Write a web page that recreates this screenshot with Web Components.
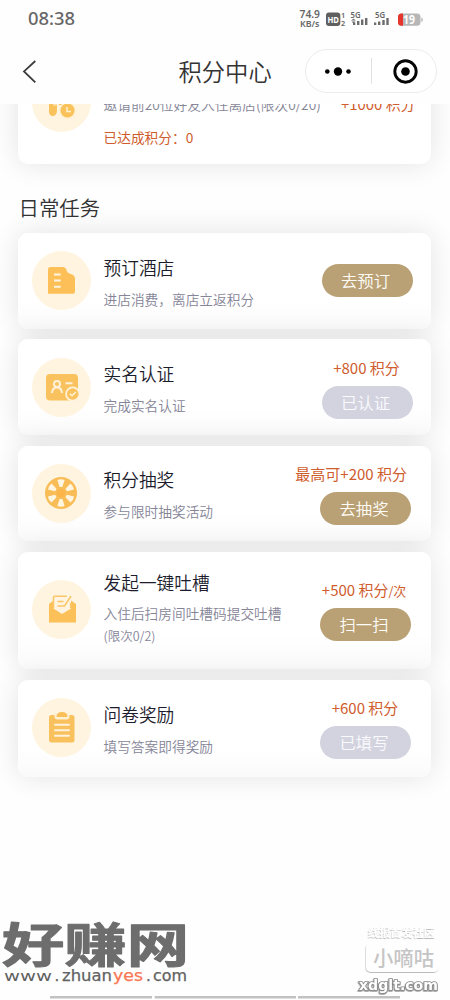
<!DOCTYPE html>
<html lang="zh-CN">
<head>
<meta charset="utf-8">
<title>积分中心</title>
<style>
html,body{margin:0;height:100%;background:#fefefe;overflow:hidden}
body{font-family:"Noto Sans CJK SC","Noto Sans",sans-serif}
</style>
</head>
<body>
<points-app></points-app>
<script>
const define = (name, html, setup) => {
  const tpl = document.createElement('template');
  tpl.innerHTML = html;
  customElements.define(name, class extends HTMLElement {
    constructor() {
      super();
      this.attachShadow({mode: 'open'}).append(tpl.content.cloneNode(true));
    }
    connectedCallback() { if (setup) setup(this, this.shadowRoot); }
  });
};

define('status-bar', `
<style>
:host{display:flex;height:39px;justify-content:space-between;align-items:stretch}
svg{display:block}
text{font-family:"Noto Sans",sans-serif;fill:#676767}
</style>
<svg width="100" height="39"><text x="28" y="25.3" font-size="17.3" font-weight="500" textLength="47" lengthAdjust="spacingAndGlyphs">08:38</text></svg>
<svg width="155" height="39">
<text x="4.5" y="17.6" font-size="10" font-weight="600" textLength="20.5" lengthAdjust="spacingAndGlyphs">74.9</text>
<text x="5" y="27" font-size="8.8" font-weight="600" textLength="19.5" lengthAdjust="spacingAndGlyphs">KB/s</text>
<rect x="31" y="12.5" width="14.3" height="13.5" rx="3" fill="#5f5f5f"/>
<text x="32.4" y="23" font-size="9.5" font-weight="700" textLength="11.5" lengthAdjust="spacingAndGlyphs" style="fill:#fff">HD</text>
<text x="46" y="17.6" font-size="7.4" font-weight="600">1</text>
<text x="46" y="25.6" font-size="7.4" font-weight="600">2</text>
<text x="55.5" y="18.2" font-size="8" font-weight="600" textLength="10" lengthAdjust="spacingAndGlyphs">5G</text>
<text x="80" y="18.2" font-size="8" font-weight="600" textLength="10" lengthAdjust="spacingAndGlyphs">5G</text>
<g fill="#6c6c6c"><path d="M56 20.6h5l-2.5-1.8zM56.5 21.6h4l-2 2z"/><path d="M58 22.5h2.3V25H58zM62 21h2.4v4H62zM66 19.5h2.4V25H66zM70 18h2.4v7H70zM79 22.5h2.3V25H79zM83 21.5h2.4V25H83zM87.3 20h2.4v5h-2.4zM91.3 18h2.4v7h-2.4z"/></g>
<rect x="103" y="13.5" width="22.5" height="12.3" rx="3.6" fill="#b7b7b7"/>
<path d="M108 13.5h-1.4a3.6 3.6 0 0 0-3.6 3.6v5.1a3.6 3.6 0 0 0 3.6 3.6h1.4z" fill="#e5352c"/>
<path d="M126.3 17.5q1.6.3 1.6 2.2t-1.6 2.2z" fill="#b7b7b7"/>
<text x="108" y="24" font-size="11.5" font-weight="700" textLength="12" lengthAdjust="spacingAndGlyphs" style="fill:#fff">19</text>
</svg>`);

define('nav-bar', `
<style>
:host{display:grid;grid-template-columns:305px 132px;height:65px}
svg{display:block}
.capsule{margin-top:10px;width:130px;height:42px;border:1px solid #ececec;border-radius:23px;background:#fff}
text{font-family:"Noto Sans CJK SC",sans-serif}
</style>
<svg width="305" height="65"><path d="M35.3 22 24 32.4 35.3 43.3" fill="none" stroke="#3c3c3c" stroke-width="1.8"/>
<text x="178.5" y="42.3" font-size="23.3" fill="#333" font-weight="350">积分中心</text></svg>
<svg class="capsule" viewBox="0 0 130 42"><circle cx="21.3" cy="21.5" r="2.3"/><circle cx="32" cy="21.5" r="4.2"/><circle cx="42.5" cy="21.5" r="2.3"/><path d="M65.5 8v26" stroke="#e2e2e2"/><circle cx="99.5" cy="21.5" r="10.7" fill="none" stroke="#050505" stroke-width="2.9"/><circle cx="99.5" cy="21.5" r="4.3"/></svg>`);

const ICONS = {
  invite: '<path d="M17 20h8v17.5a4.2 6 0 0 1-8 2z" fill="#fac25b"/><path d="M22 22v10h5" fill="none" stroke="#fff0d2" stroke-width="1.2"/><path d="M27 24h13v8H27z" fill="#fac25b"/><circle cx="35.5" cy="37.5" r="8.5" fill="#fff0d2"/><circle cx="35.5" cy="37.5" r="7" fill="#fac25b"/><path d="M35 34v4.5h4" fill="none" stroke="#fff0d2" stroke-width="1.5"/>',
  hotel: '<path d="M16 18.5a2.5 2.5 0 0 1 2.5-2.5h12q3.5 0 4.2 3.5.5 2.3 2.8 3l3 1.2q2.5 1 2.5 3.8v13.3a2 2 0 0 1-2 2H16z" fill="#fdc058"/><path d="M22 23.5h6.7M22 29.5h6.7M22 35.7h6.7" stroke="#fff4df" stroke-width="2"/>',
  identity: '<rect x="14" y="16" width="32" height="26.5" rx="4" fill="#fac25f"/><circle cx="25" cy="26" r="3" fill="none" stroke="#fff2d9" stroke-width="2"/><path d="M20 35q.5-5.5 5-5.5t5 5.5M33.5 25.2h7" fill="none" stroke="#fff2d9" stroke-width="2"/><circle cx="40.7" cy="36" r="7.5" fill="#fff2db"/><circle cx="40.7" cy="36" r="5.8" fill="#fac25f"/><path d="m37.8 35.8 2.2 2 3.8-3.9" fill="none" stroke="#fff2d9" stroke-width="1.5"/>',
  wheel: '<circle cx="29" cy="29" r="16" fill="#f9bd58"/><g fill="#fff6e2"><path id="s" d="m27.6 23-2.2-7q3.6-1.4 7.2 0l-2.2 7z"/><use href="#s" transform="rotate(60 29 29)"/><use href="#s" transform="rotate(120 29 29)"/><use href="#s" transform="rotate(180 29 29)"/><use href="#s" transform="rotate(240 29 29)"/><use href="#s" transform="rotate(300 29 29)"/></g><circle cx="29" cy="29" r="4" fill="#fcb54a"/>',
  mail: '<path d="m17 24 4.5-3.5v8L30 34l9-5.5v-8l5 3.500v18.5H17z" fill="#fbc058"/><path d="M21.5 28V17.5a1.3 1.3 0 0 1 1.3-1.3h12M38.700 23v5M25.500 21.500h6M25.500 26h7l6.600-10" fill="none" stroke="#fbc568" stroke-width="1.5"/>',
  survey: '<rect x="17" y="17" width="25.5" height="27.5" rx="2.5" fill="#f9c15e"/><path d="M22.5 15h15v3.5q0 3-3 3h-9q-3 0-3-3z" fill="#fff0d2"/><path d="M24.5 19q0-5 5.500-5t5.500 5z" fill="#f9bf58"/><path d="M23 26.700h14M23 32.200h14M23 37.800h14" stroke="#fff2dc" stroke-width="1.9" stroke-linecap="round"/>'
};
define('task-icon', `
<style>:host{display:block;width:59px;height:59px;border-radius:50%;background:#fff4df}svg{display:block}</style>
<svg width="59" height="59" viewBox="0 0 59 59"></svg>`, (el, root) => {
  root.querySelector('svg').innerHTML = ICONS[el.getAttribute('name')];
});

define('pill-button', `
<style>
:host{display:block;width:91px;height:33px;border-radius:17px;background:#b9a175;color:#fffdf8;font-size:16.4px;line-height:32px;text-align:center;text-indent:-3px;font-weight:350}
:host([done]){background:#d3d3df;color:#fafafd}
</style><slot></slot>`);

define('task-card', `
<style>
:host{display:grid;grid-template-columns:59px 1fr auto;box-sizing:border-box;width:412.5px;height:var(--h,95.5px);padding:0 18px 0 14px;column-gap:12.5px;align-items:center;border-radius:10px;background:linear-gradient(#fff 70%,#fafafa);box-shadow:0 0 28px rgba(0,0,0,.11)}
task-icon{margin-top:var(--icon,0px)}
.body{margin-top:var(--text,4px);white-space:nowrap;min-width:0}
.title{font-size:17.7px;line-height:32px;color:#1c1c2c;display:block;font-weight:350}
.desc{font-size:13.7px;line-height:var(--lead,32px);color:#858597;display:block;font-weight:350}
.action{margin-top:var(--act,0px);width:91px;margin-right:var(--right,0px)}
.points{display:flex;justify-content:var(--pj,center);width:var(--pw,90px);height:22px;margin-bottom:7px;white-space:nowrap;color:#cf5c2d;font-size:15px;line-height:22px}
.points.none{display:none}
</style>
<task-icon></task-icon>
<div class="body"><slot name="title" class="title"></slot><slot name="desc" class="desc"></slot></div>
<div class="action"><div class="points"><slot name="points"></slot></div><slot name="button"></slot></div>`, (el, root) => {
  const icon = document.createElement('task-icon');
  icon.setAttribute('name', el.getAttribute('icon'));
  root.querySelector('task-icon').replaceWith(icon);
  if (!el.querySelector('[slot=points]')) root.querySelector('.points').classList.add('none');
});

define('invite-card', `
<style>
:host{display:grid;grid-template-columns:59px 1fr auto;column-gap:12.5px;box-sizing:border-box;width:412.5px;height:96px;margin-top:-36px;padding:0 15px 0 14px;border-radius:10px;background:#fff;box-shadow:0 0 28px rgba(0,0,0,.11);white-space:nowrap}
task-icon{margin-top:5px}
.desc{font-size:13.75px;line-height:32px;margin-top:20px;color:#858597;font-weight:350}
.done,.pts{color:#cf5c2d}
.done{font-size:13.7px;line-height:32px;margin-top:.5px}
.pts{font-size:14.9px;line-height:32px;margin-top:19.5px}
</style>
<task-icon name="invite"></task-icon>
<div><div class="desc">邀请前20位好友入住离店(限次0/20)</div><div class="done">已达成积分：0</div></div>
<div class="pts">+1000 积分</div>`);

define('site-mark', `
<style>:host{display:block;position:absolute;left:0;top:915px;width:450px;height:85px}svg{display:block}</style>
<svg width="450" height="85">
<defs><filter id="sh" x="-10%" y="-20%" width="130%" height="160%"><feDropShadow dx="-.5" dy="1" stdDeviation=".7" flood-color="#555" flood-opacity=".6"/></filter></defs>
<path d="M50 82.3h102M154.7 82.3H296M298 82.3h102" stroke="#c2c2c2" stroke-width="2.6"/>
<text x="2" y="46.5" font-family="Noto Sans CJK SC,sans-serif" font-size="47" font-weight="700" fill="#6d6d6d" stroke="#6d6d6d" stroke-width="1" stroke-linejoin="round" textLength="187" lengthAdjust="spacingAndGlyphs">好赚网</text>
<g font-family="DejaVu Sans,sans-serif" font-size="15" fill="#626262" stroke="#626262" stroke-width=".25"><text x="4" y="65.5" font-size="14.5" stroke="none" textLength="48" lengthAdjust="spacingAndGlyphs">www</text><text x="54.5" y="65.5">.</text><text x="62" y="65.5" textLength="50" lengthAdjust="spacingAndGlyphs">zhuan</text><text x="113" y="65.5" fill="#fa7754" stroke="#fa7754" textLength="30" lengthAdjust="spacingAndGlyphs">yes</text><text x="146" y="65.5">.</text><text x="153" y="65.5" textLength="34" lengthAdjust="spacingAndGlyphs">com</text></g>
<text x="368" y="21.5" filter="url(#sh)" font-family="Noto Sans CJK SC,sans-serif" font-size="11" font-weight="700" fill="#fff" opacity=".65" textLength="67" lengthAdjust="spacingAndGlyphs">线报首发社区</text>
<rect x="366" y="28" width="73" height="29" rx="5" fill="#fff" filter="url(#sh)" opacity=".65"/>
<text x="373" y="50.5" font-family="Noto Sans CJK SC,sans-serif" font-size="20" font-weight="500" fill="#c5c5c5" textLength="61" lengthAdjust="spacingAndGlyphs">小嘀咕</text>
<text x="359" y="74.5" filter="url(#sh)" font-family="DejaVu Sans,sans-serif" font-size="13.5" font-weight="700" fill="#fff" stroke="#888" stroke-width="1.7" paint-order="stroke" textLength="79" lengthAdjust="spacingAndGlyphs">xdglt.com</text>
</svg>`);

define('points-app', `
<style>
:host{display:block;position:relative;width:450px;height:1000px;overflow:hidden;background:#fefefe}
header{background:#fefefe}
main{height:896px;overflow:hidden;padding-left:18px;box-sizing:border-box}
h2{margin:0;font-size:20.4px;line-height:30px;font-weight:350;color:#333;padding:28px 0 11px .5px}
.list{display:flex;flex-direction:column;gap:10.9px}
small{font-size:12.7px}
.second{display:block;font-size:12.5px;line-height:18px;margin-top:-1px}
</style>
<header><status-bar></status-bar><nav-bar></nav-bar></header>
<main>
<invite-card></invite-card>
<h2>日常任务</h2>
<div class="list">
<task-card icon="hotel" style="--text:3.5px"><span slot="title">预订酒店</span><span slot="desc">进店消费，离店立返积分</span><pill-button slot="button">去预订</pill-button></task-card>
<task-card icon="identity" style="--act:1.5px;--text:3.5px"><span slot="title">实名认证</span><span slot="desc">完成实名认证</span><span slot="points">+800 积分</span><pill-button slot="button" done>已认证</pill-button></task-card>
<task-card icon="wheel" style="--h:95px;--act:1.5px;--text:3px;--right:1.5px;--pj:flex-end;--pw:87px"><span slot="title">积分抽奖</span><span slot="desc">参与限时抽奖活动</span><span slot="points">最高可+200 积分</span><pill-button slot="button">去抽奖</pill-button></task-card>
<task-card icon="mail" style="--h:117px;--text:-9.5px;--icon:-2px;--lead:30px;--act:0px;--right:1.5px;--pw:88px"><span slot="title">发起一键吐槽</span><span slot="desc">入住后扫房间吐槽码提交吐槽<span class="second">(限次0/2)</span></span><span slot="points">+500 积分<small>/次</small></span><pill-button slot="button">扫一扫</pill-button></task-card>
<task-card icon="survey" style="--h:97px;--right:1.5px;--text:3px;--icon:-1px"><span slot="title">问卷奖励</span><span slot="desc">填写答案即得奖励</span><span slot="points">+600 积分</span><pill-button slot="button" done>已填写</pill-button></task-card>
</div>
</main>
<site-mark></site-mark>`);
</script>
</body>
</html>
